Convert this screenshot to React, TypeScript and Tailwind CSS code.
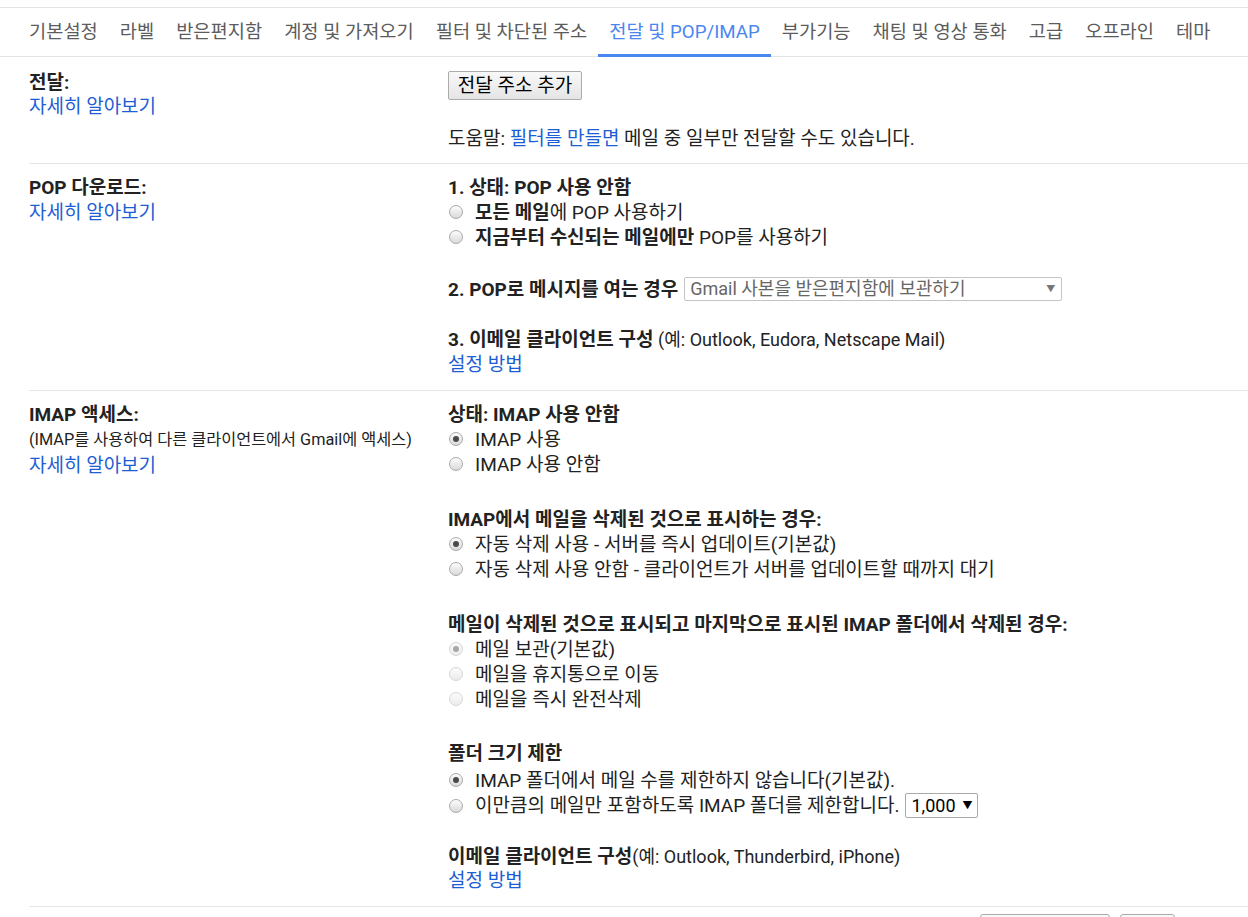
import React from "react";

const FONT = { fontFamily: "Roboto, 'Noto Sans CJK KR', sans-serif" };

function Radio({ checked = false, disabled = false }: { checked?: boolean; disabled?: boolean }) {
  return (
    <span
      className={
        disabled
          ? "inline-flex h-[14px] w-[14px] shrink-0 items-center justify-center rounded-full border border-[#d6d6d6] bg-gradient-to-b from-[#fbfbfb] to-[#ececec]"
          : "inline-flex h-[14px] w-[14px] shrink-0 items-center justify-center rounded-full border border-[#a9a9a9] bg-gradient-to-b from-[#fdfdfd] to-[#d9d9d9]"
      }
    >
      {checked && (
        <span className={disabled ? "h-[6px] w-[6px] rounded-full bg-[#a8a8a8]" : "h-[6px] w-[6px] rounded-full bg-[#4a4a4a]"} />
      )}
    </span>
  );
}

function RadioRow({
  checked,
  disabled,
  children,
  className = "",
}: {
  checked?: boolean;
  disabled?: boolean;
  children: React.ReactNode;
  className?: string;
}) {
  return (
    <div className={`flex items-center leading-[25px] ${className}`}>
      <span className="ml-[1px] mr-[12px] flex">
        <Radio checked={checked} disabled={disabled} />
      </span>
      <span>{children}</span>
    </div>
  );
}

const tabs = [
  "기본설정",
  "라벨",
  "받은편지함",
  "계정 및 가져오기",
  "필터 및 차단된 주소",
  "전달 및 POP/IMAP",
  "부가기능",
  "채팅 및 영상 통화",
  "고급",
  "오프라인",
  "테마",
];

const Link = ({ children }: { children: React.ReactNode }) => (
  <span className="text-[#1c5ed4] cursor-pointer">{children}</span>
);

export default function App() {
  return (
    <div className="min-h-[917px] w-[1248px] bg-white text-[19px] text-[#222]" style={FONT}>
      <div className="h-[7px]" />
      <div className="flex h-[50px] border-y border-[#e3e3e3] pl-[18px]">
        {tabs.map((t) => {
          const active = t === "전달 및 POP/IMAP";
          return (
            <div
              key={t}
              className={
                active
                  ? "relative flex items-center px-[11px] text-[18.7px] text-[#4a86f0]"
                  : "relative flex items-center px-[11px] text-[18.7px] text-[#5c5c5c]"
              }
            >
              <span className="leading-[24px]">{t}</span>
              {active && <span className="absolute bottom-[-1px] left-0 right-0 h-[3px] bg-[#4a86f0]" />}
            </div>
          );
        })}
      </div>

      <div className="pl-[29px]">
        {/* 전달 */}
        <div className="flex border-b border-[#e5e5e5] pt-[14px] pb-[12px]">
          <div className="w-[419px] shrink-0">
            <div className="pt-[1px] font-bold leading-[22px]">전달:</div>
            <div className="leading-[25px]">
              <Link>자세히 알아보기</Link>
            </div>
          </div>
          <div>
            <button className="h-[29px] w-[134px] rounded-[2px] border border-[#ababab] bg-gradient-to-b from-[#f8f8f8] to-[#e5e5e5] text-[19px] leading-[25px] text-black">
              전달 주소 추가
            </button>
            <div className="mt-[25px] leading-[25px]">
              도움말: <Link>필터를 만들면</Link> 메일 중 일부만 전달할 수도 있습니다.
            </div>
          </div>
        </div>

        {/* POP */}
        <div className="flex border-b border-[#e5e5e5] pt-[11px] pb-[13px]">
          <div className="w-[419px] shrink-0">
            <div className="font-bold leading-[25px]">POP 다운로드:</div>
            <div className="leading-[25px]">
              <Link>자세히 알아보기</Link>
            </div>
          </div>
          <div>
            <div className="font-bold leading-[25px]">1. 상태: POP 사용 안함</div>
            <RadioRow>
              <b>모든 메일</b>에 POP 사용하기
            </RadioRow>
            <RadioRow>
              <b>지금부터 수신되는 메일에만</b> POP를 사용하기
            </RadioRow>
            <div className="mt-[27px] flex items-center leading-[25px]">
              <span className="font-bold">2. POP로 메시지를 여는 경우</span>
              <div className="ml-[6px] flex h-[24px] w-[378px] items-center justify-between rounded-[2px] border border-[#c4c4c4] bg-white pl-[5px] pr-[6px] text-[18px] text-[#666]">
                <span className="leading-[22px]">Gmail 사본을 받은편지함에 보관하기</span>
                <span className="text-[9px] text-[#777]">▼</span>
              </div>
            </div>
            <div className="mt-[25px] leading-[25px]">
              <b>3. 이메일 클라이언트 구성</b> <span className="text-[18px]">(예: Outlook, Eudora, Netscape Mail)</span>
            </div>
            <div className="leading-[25px]">
              <Link>설정 방법</Link>
            </div>
          </div>
        </div>

        {/* IMAP */}
        <div className="flex border-b border-[#e5e5e5] pt-[11px] pb-[13px]">
          <div className="w-[419px] shrink-0">
            <div className="font-bold leading-[25px]">IMAP 액세스:</div>
            <div className="text-[16.3px] leading-[26px]">(IMAP를 사용하여 다른 클라이언트에서 Gmail에 액세스)</div>
            <div className="leading-[26px]">
              <Link>자세히 알아보기</Link>
            </div>
          </div>
          <div>
            <div className="font-bold leading-[25px]">상태: IMAP 사용 안함</div>
            <RadioRow checked>IMAP 사용</RadioRow>
            <RadioRow>IMAP 사용 안함</RadioRow>

            <div className="mt-[30px] font-bold leading-[25px]">IMAP에서 메일을 삭제된 것으로 표시하는 경우:</div>
            <RadioRow checked>자동 삭제 사용 - 서버를 즉시 업데이트(기본값)</RadioRow>
            <RadioRow>자동 삭제 사용 안함 - 클라이언트가 서버를 업데이트할 때까지 대기</RadioRow>

            <div className="mt-[30px] font-bold leading-[25px]">
              메일이 삭제된 것으로 표시되고 마지막으로 표시된 IMAP 폴더에서 삭제된 경우:
            </div>
            <RadioRow checked disabled>메일 보관(기본값)</RadioRow>
            <RadioRow disabled>메일을 휴지통으로 이동</RadioRow>
            <RadioRow disabled>메일을 즉시 완전삭제</RadioRow>

            <div className="mt-[29px] font-bold leading-[25px]">폴더 크기 제한</div>
            <RadioRow checked className="mt-[2px]">
              IMAP 폴더에서 메일 수를 제한하지 않습니다(기본값).
            </RadioRow>
            <div className="flex h-[26px] items-center">
              <span className="ml-[1px] mr-[12px] flex">
                <Radio />
              </span>
              <span className="leading-[25px]">이만큼의 메일만 포함하도록 IMAP 폴더를 제한합니다.</span>
              <div className="ml-[6px] flex h-[25px] w-[73px] items-center justify-between rounded-[2px] border border-[#a9a9a9] bg-white pl-[5px] pr-[5px] text-[18px] text-black">
                <span className="leading-[22px]">1,000</span>
                <span className="text-[10px]">▼</span>
              </div>
            </div>

            <div className="mt-[26px] leading-[24px]">
              <b>이메일 클라이언트 구성</b><span className="text-[18px]">(예: Outlook, Thunderbird, iPhone)</span>
            </div>
            <div className="leading-[24px]">
              <Link>설정 방법</Link>
            </div>
          </div>
        </div>

        <div className="flex gap-[10px] pl-[951px] pt-[7px]">
          <div className="h-[29px] w-[130px] rounded-[3px] border border-[#ababab] bg-gradient-to-b from-[#f8f8f8] to-[#e5e5e5]" />
          <div className="h-[29px] w-[55px] rounded-[3px] border border-[#ababab] bg-gradient-to-b from-[#f8f8f8] to-[#e5e5e5]" />
        </div>
      </div>
    </div>
  );
}
